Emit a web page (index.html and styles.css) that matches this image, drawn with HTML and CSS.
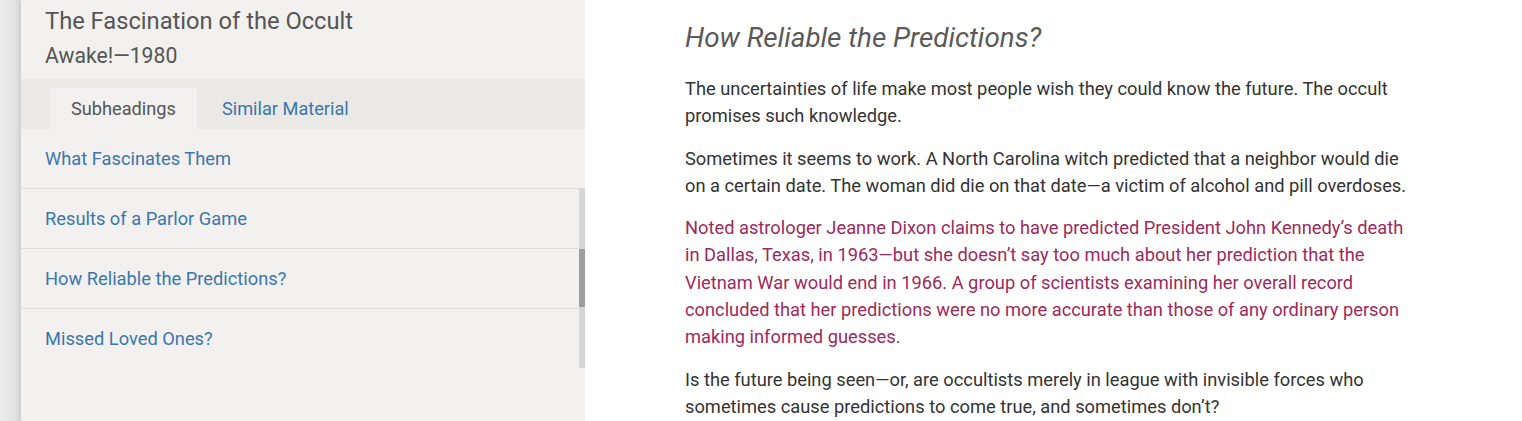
FILE: index.html
```html
<!DOCTYPE html>
<html lang="en">
<head>
  <meta charset="UTF-8" />
  <title>How Reliable the Predictions?</title>
  <meta name="viewport" content="width=device-width, initial-scale=1.0" />
  <link rel="stylesheet" href="styles.css">
</head>
<body>

  <div class="gutter"></div>

  <!-- Sidebar with article navigation -->
  <aside class="sidebar">
    <div class="sidebar-header">
      <div class="title">The Fascination of the Occult</div>
      <div class="subtitle">Awake!—1980</div>
    </div>

    <div class="tabs">
      <div class="tab active">Subheadings</div>
      <div class="tab">Similar Material</div>
    </div>

    <div class="toc">
      <a class="toc-item" href="#">What Fascinates Them</a>
      <a class="toc-item" href="#">Results of a Parlor Game</a>
      <a class="toc-item" href="#">How Reliable the Predictions?</a>
      <a class="toc-item last" href="#">Missed Loved Ones?</a>
      <div class="scroll-track">
        <div class="scroll-thumb"></div>
      </div>
    </div>
  </aside>

  <!-- Article text -->
  <main class="article">
    <h2>How Reliable the Predictions?</h2>

    <p>The uncertainties of life make most people wish they could know the future. The occult promises such knowledge.</p>

    <p>Sometimes it seems to work. A North Carolina witch predicted that a neighbor would die on a certain date. The woman did die on that date—a victim of alcohol and pill overdoses.</p>

    <p class="highlight">Noted astrologer Jeanne Dixon claims to have predicted President John Kennedy’s death in Dallas, Texas, in 1963—but she doesn’t say too much about her prediction that the Vietnam War would end in 1966. A group of scientists examining her overall record concluded that her predictions were no more accurate than those of any ordinary person making informed guesses.</p>

    <p>Is the future being seen—or, are occultists merely in league with invisible forces who sometimes cause predictions to come true, and sometimes don’t?</p>
  </main>

</body>
</html>
```

FILE: styles.css
```css
body {
  font-family: 'Roboto', 'Liberation Sans', sans-serif;
  background: #fff;
  color: #333;
  margin: 0;
  height: 421px;
  display: flex;
  overflow: hidden;
}

.gutter {
  width: 21px;
  flex-shrink: 0;
  background: linear-gradient(to right, #ebebeb, #e4e4e4 70%, #d9d9d9);
}

.sidebar {
  width: 564px;
  flex-shrink: 0;
  background: #f2f1ef;
  box-shadow: -2px 0 4px rgba(0,0,0,0.06);
}

.sidebar-header {
  padding: 6px 24px 8px;
  color: #555;
}

.title {
  font-size: 23.7px;
  line-height: 31px;
}

.subtitle {
  font-size: 21.2px;
  line-height: 30px;
  margin-top: 4px;
}

.tabs {
  display: flex;
  gap: 4px;
  height: 50px;
  padding: 9px 0 0 29px;
  box-sizing: border-box;
  background: #eae9e6;
}

.tab {
  padding: 0 21px;
  font-size: 18.2px;
  line-height: 41px;
  color: #3b76ad;
}

.tab.active {
  background: #f2f1ef;
  color: #555;
}

.toc {
  position: relative;
}

.toc-item {
  display: block;
  height: 59px;
  line-height: 59px;
  padding: 0 24px;
  font-size: 18.3px;
  color: #3b76ad;
  text-decoration: none;
  border-bottom: 1px solid #dddcd9;
}

.toc-item.last {
  border-bottom: none;
}

.scroll-track {
  position: absolute;
  right: 0;
  top: 59px;
  width: 6px;
  height: 180px;
  background: #d6d6d6;
}

.scroll-thumb {
  margin-top: 61px;
  height: 58px;
  background: #9e9e9e;
}

.article {
  flex: 1;
  padding: 20px 0 0 100px;
  border-top: 1px solid #ebebeb;
  margin-top: -1px;
}

.article h2 {
  margin: 0 0 19px;
  font-size: 27.8px;
  line-height: 36px;
  font-weight: normal;
  font-style: italic;
  color: #5a5a5a;
}

.article p {
  max-width: 728px;
  margin: 0 0 15px;
  font-size: 18.3px;
  line-height: 27.3px;
}

.article p.highlight {
  color: #9c2a5c;
}
```
